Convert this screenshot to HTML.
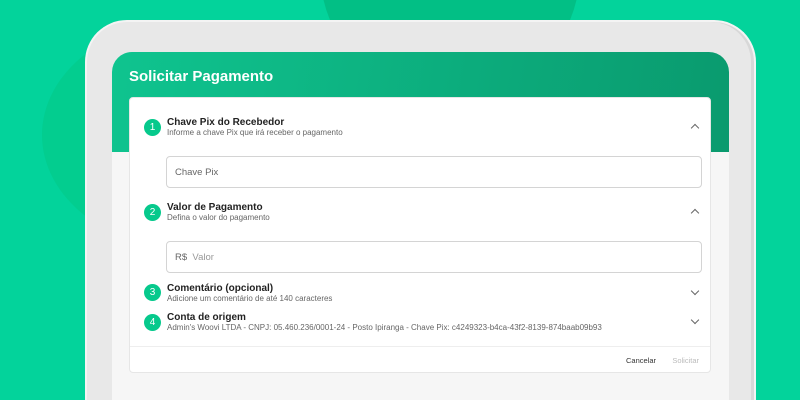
<!DOCTYPE html>
<html><head><style>
*{margin:0;padding:0;box-sizing:border-box}
html,body{width:800px;height:400px;overflow:hidden}
body{background:#03d39b;font-family:"Liberation Sans",sans-serif;position:relative}
.c1{position:absolute;left:320px;top:-160px;width:260px;height:260px;border-radius:50%;background:#02bf85}
.c2{position:absolute;left:42px;top:20px;width:300px;height:230px;border-radius:50%;background:#03cd8f}
.tab{position:absolute;left:85px;top:20px;width:671px;height:380px;border-radius:42px 42px 0 0;background:#e8e8e8;border:2px solid #f4f4f4;border-bottom:none;box-shadow:inset -3px 0 0 #d8d8d8}
.scr{position:absolute;left:112px;top:52px;width:617px;height:348px;border-radius:20px 20px 0 0;background:#f6f6f6;overflow:hidden}
.hd{height:100px;background:linear-gradient(100deg,#0fc48f,#0a9a6e)}
.scr h1{position:absolute;left:17px;top:16px;color:#fff;font-size:15px;font-weight:bold}
.card{position:absolute;left:17px;top:45px;width:582px;height:276px;background:#fff;border-radius:4px;border:1px solid #e6e6e6}
.n{position:absolute;width:17px;height:17px;border-radius:50%;background:#06c98c;color:#fff;font-size:10px;text-align:center;line-height:17px;left:14px}
.t{position:absolute;left:37px;font-size:10px;font-weight:bold;color:#222}
.s{position:absolute;left:37px;font-size:8px;color:#666;white-space:nowrap}
.ch{position:absolute;right:12px;width:6px;height:6px;border-left:1.3px solid #666;border-top:1.3px solid #666}
.up{transform:rotate(45deg)}.dn{transform:rotate(225deg)}
.in{position:absolute;left:36px;width:536px;height:32px;border:1px solid #d4d4d4;border-radius:4px;font-size:9.5px;color:#666;padding:10px 8px}
.ft{position:absolute;left:0;right:0;top:248px;border-top:1px solid #eee;height:28px;font-size:7.5px}
</style></head><body>
<div class="c2"></div><div class="c1"></div>
<div class="tab"></div>
<div class="scr"><div class="hd"></div><h1>Solicitar Pagamento</h1>
<div class="card">
<div class="n" style="top:21px">1</div><div class="t" style="top:19px">Chave Pix do Recebedor</div><div class="s" style="top:30px">Informe a chave Pix que irá receber o pagamento</div><div class="ch up" style="top:27px"></div>
<div class="in" style="top:58px">Chave Pix</div>
<div class="n" style="top:106px">2</div><div class="t" style="top:104px">Valor de Pagamento</div><div class="s" style="top:115px">Defina o valor do pagamento</div><div class="ch up" style="top:112px"></div>
<div class="in" style="top:143px">R$ <span style="color:#999">&nbsp;Valor</span></div>
<div class="n" style="top:186px">3</div><div class="t" style="top:185px">Comentário (opcional)</div><div class="s" style="top:196px">Adicione um comentário de até 140 caracteres</div><div class="ch dn" style="top:190px"></div>
<div class="n" style="top:216px">4</div><div class="t" style="top:214px">Conta de origem</div><div class="s" style="top:225px">Admin's Woovi LTDA - CNPJ: 05.460.236/0001-24 - Posto Ipiranga - Chave Pix: c4249323-b4ca-43f2-8139-874baab09b93</div><div class="ch dn" style="top:219px"></div>
<div class="ft"><span style="position:absolute;right:54px;top:9px;color:#333">Cancelar</span><span style="position:absolute;right:11px;top:9px;color:#bbb">Solicitar</span></div>
</div></div>
</body></html>
